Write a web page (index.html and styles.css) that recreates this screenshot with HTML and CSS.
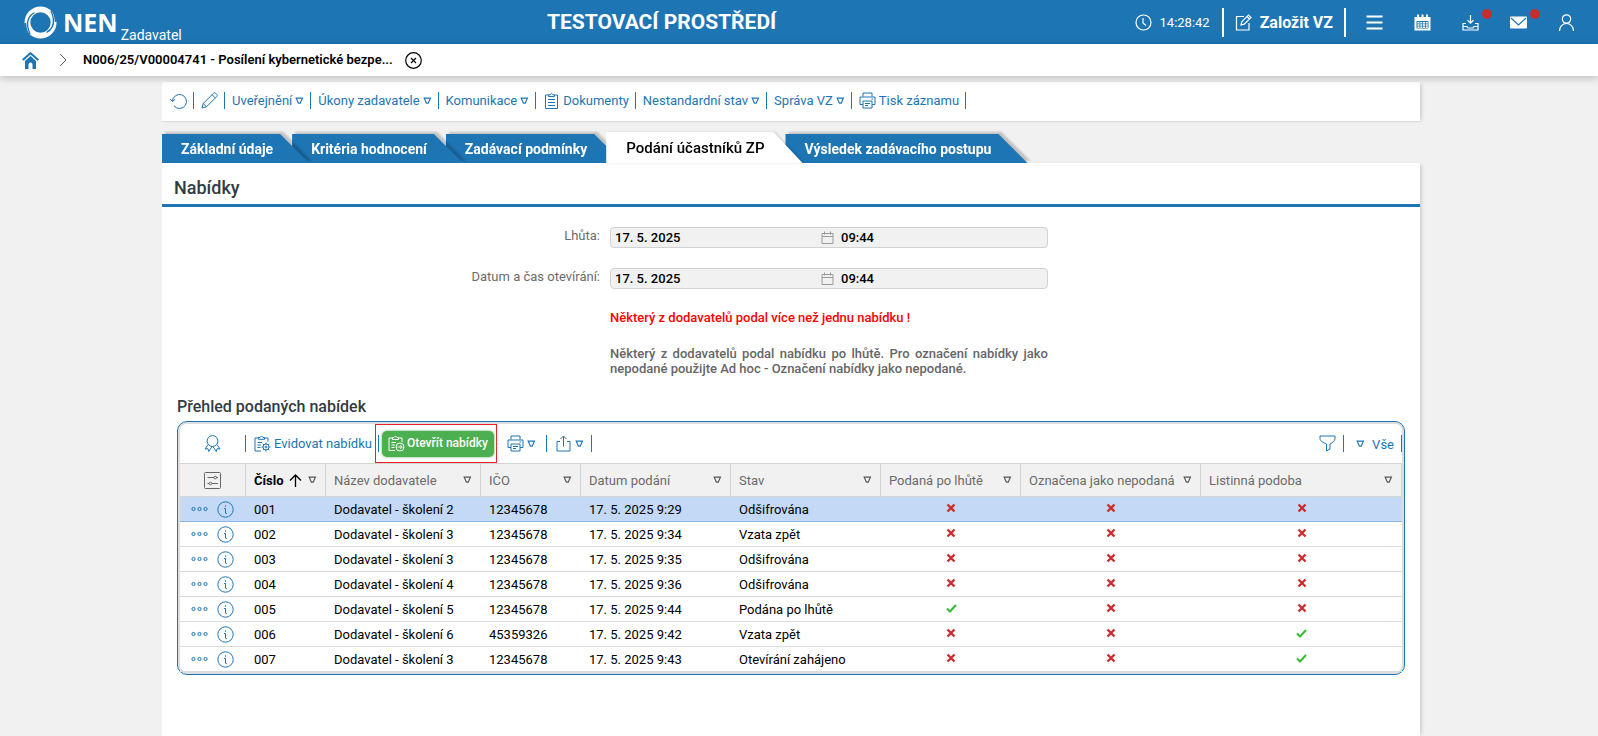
FILE: index.html
```html
<!DOCTYPE html>
<html lang="cs">
<head>
<meta charset="utf-8">
<meta name="viewport" content="width=device-width, initial-scale=1">
<title>NEN – Nabídky</title>
<link rel="stylesheet" href="styles.css">
</head>
<body>
<svg class="sprite" aria-hidden="true">
  <symbol id="tri" viewBox="0 0 9 8"><path d="M1.2 1.2h6.2L5.2 6.2H3.4z"/></symbol>
  <symbol id="print" viewBox="0 0 17 17"><path d="M4 4.5V1h9v3.5M4 12.5H1V5h15v7.5h-3M4 9h9v7H4zM6 11.5h5M6 13.5h3M12.5 7h1.5"/></symbol>
  <symbol id="info" viewBox="0 0 17 17"><circle cx="8.500" cy="8.500" r="7.700"/><path d="M8.500 4.300v1.500M7 7.500h1.500v4.500c0 .6.500.7 1.300.5"/></symbol>
  <symbol id="dots" viewBox="0 0 17 6"><circle cx="2.500" cy="3" r="1.600"/><circle cx="8.500" cy="3" r="1.600"/><circle cx="14.500" cy="3" r="1.600"/></symbol>
  <symbol id="cal" viewBox="0 0 13 13"><path d="M1 2.500h11v10H1zM1 5.500h11M3.500.500v3M9.500.500v3"/></symbol>
  <symbol id="no" viewBox="0 0 10 10"><path d="M1.500 1.500l7 7M8.500 1.500l-7 7"/></symbol>
  <symbol id="yes" viewBox="0 0 11 9"><path d="M1 4.500l3 3L10 1"/></symbol>
</svg>

<header class="topbar">
  <a class="brand" href="#">
    <svg class="brand-mark" viewBox="0 0 33 33" aria-hidden="true">
      <path fill="#fff" fill-rule="evenodd" d="M16.500.5a16 16 0 1 1 0 32a16 16 0 1 1 0-32zM16.500 6.300a10.200 10.200 0 1 0 0 20.400a10.200 10.200 0 1 0 0-20.400z"/>
      <path fill="none" stroke="#1e75b4" stroke-width="1.400" d="M10.500 6.500C5 9.500 3 14 3.600 20C4 23 4.500 25 6 28M22.500 26.500c5.500-3 7.500-7.500 6.900-13.500C29 10 28.500 8 27 5"/>
      <path fill="#1e75b4" d="M.3 17C-.2 22 2 26.500 6 29.500C3.500 26 2.300 22 2.200 17zM32.700 16C33.200 11 31 6.500 27 3.500C29.500 7 30.700 11 30.800 16z"/>
    </svg>
    <span class="brand-name">NEN</span>
    <span class="brand-role">Zadavatel</span>
  </a>
  <strong class="environment">TESTOVACÍ PROSTŘEDÍ</strong>
  <div class="top-actions">
    <span class="clock">
      <svg class="ico" viewBox="0 0 17 17"><circle cx="8.500" cy="8.500" r="7.500"/><path d="M8 4v5l3 2.500"/></svg>
      <time>14:28:42</time>
    </span>
    <button class="create">
      <svg class="ico" viewBox="0 0 17 17"><path d="M9 2.500H1.500V16H14V9M6 11l.8-3.300L13.500 1l2.500 2.500-6.700 6.700zM12 2.500l2.500 2.500"/></svg>
      Založit VZ
    </button>
    <nav class="top-icons" aria-label="Uživatelské nástroje">
      <button aria-label="Menu"><svg class="ico thick" viewBox="0 0 17 17"><path d="M.5 2.500h16M.5 8.500h16M.5 14.500h16"/></svg></button>
      <button aria-label="Kalendář"><svg class="ico solid" viewBox="0 0 17 17"><path fill-rule="evenodd" d="M.5 3H3V.5h2V3h2.500V.5h2V3H12V.5h2V3h2.500v13.500H.5zM2.500 7v7.500h12V7z"/><path d="M3.500 8h2v1.500h-2zM6.300 8h2v1.500h-2zM9 8h2v1.500H9zM11.800 8h2v1.500h-2zM3.500 10.300h2v1.500h-2zM6.300 10.300h2v1.500h-2zM9 10.300h2v1.500H9zM11.800 10.300h2v1.500h-2zM3.500 12.500h2V14h-2zM6.300 12.500h2V14h-2zM9 12.500h2V14H9zM11.800 12.500h2V14h-2z"/></svg></button>
      <button aria-label="Stažené soubory"><svg class="ico" viewBox="0 0 17 17"><path d="M8.500 1v8M5.500 6.200l3 3 3-3M4 9.500H1V16h15V9.500h-3M1 12.500h4l1 1.500h5l1-1.500h4"/></svg><i class="badge"></i></button>
      <button aria-label="Zprávy"><svg class="ico solid" viewBox="0 0 17 17"><rect y="2.500" width="17" height="12" rx="1"/><path fill="none" stroke="#1e75b4" d="M1 4l7.500 7L16 4"/></svg><i class="badge"></i></button>
      <button aria-label="Profil"><svg class="ico" viewBox="0 0 17 17"><circle cx="8.500" cy="5" r="4.200"/><path d="M1.500 17c0-4.500 3-7.500 7-7.500s7 3 7 7.500"/></svg></button>
    </nav>
  </div>
</header>

<nav class="crumbs" aria-label="Navigace">
  <a href="#" aria-label="Domů"><svg class="home" viewBox="0 0 17 17"><path d="M3 9l5.500-5L14 9v8h-3.500v-4.500a2 2 0 0 0-4 0V17H3z"/><path class="roof" d="M.7 8L8.500 1.200 16.300 8"/></svg></a>
  <svg class="chevron" viewBox="0 0 8 14"><path d="M1 1l6 6-6 6"/></svg>
  <a class="crumb" href="#">N006/25/V00004741 - Posílení kybernetické bezpe...</a>
  <button class="close" aria-label="Zavřít"><svg viewBox="0 0 17 17"><circle cx="8.500" cy="8.500" r="7.800"/><path d="M6 6l5 5M11 6l-5 5"/></svg></button>
</nav>

<main class="page">
  <div class="toolbar record-tools">
    <button aria-label="Obnovit"><svg class="ico" viewBox="0 0 17 17"><path d="M2.500 9.500A7 7 0 1 1 4 13.800M.3 7l2.200 2.500L5 7.300"/></svg></button>
    <button aria-label="Upravit"><svg class="ico" viewBox="0 0 17 17"><path d="M1 16l1.200-4.500L12.500 1.200q1-.8 2 0l1.300 1.300q.8 1 0 2L5.500 14.800zM11 2.700l3.300 3.300M2.200 11.500l3.300 3.300"/></svg></button>
    <button>Uveřejnění <svg class="tri"><use href="#tri"/></svg></button>
    <button>Úkony zadavatele <svg class="tri"><use href="#tri"/></svg></button>
    <button>Komunikace <svg class="tri"><use href="#tri"/></svg></button>
    <button><svg class="ico" viewBox="0 0 17 17"><path d="M5.500 3H2.500v13.500h12V3h-3M5.500 4.500V2.800H7a1.600 1.600 0 0 1 3 0h1.500v1.700zM5 7.500h7M5 10.500h7M5 13.500h7"/></svg>Dokumenty</button>
    <button>Nestandardní stav <svg class="tri"><use href="#tri"/></svg></button>
    <button>Správa VZ <svg class="tri"><use href="#tri"/></svg></button>
    <button><svg class="ico"><use href="#print"/></svg>Tisk záznamu</button>
  </div>

  <div class="tabs" role="tablist">
    <div class="tab t1"><button role="tab">Základní údaje</button></div>
    <div class="tab t2"><button role="tab">Kritéria hodnocení</button></div>
    <div class="tab t3"><button role="tab">Zadávací podmínky</button></div>
    <div class="tab active"><button role="tab" aria-selected="true">Podání účastníků ZP</button></div>
    <div class="tab"><button role="tab">Výsledek zadávacího postupu</button></div>
  </div>

  <section class="panel">
    <h1>Nabídky</h1>
    <div class="form">
      <label for="deadline">Lhůta:</label>
      <div class="datetime">
        <input class="date" id="deadline" value="17. 5. 2025" readonly>
        <svg><use href="#cal"/></svg>
        <input class="time" aria-label="Lhůta – čas" value="09:44" readonly>
      </div>
      <label for="opening">Datum a čas otevírání:</label>
      <div class="datetime">
        <input class="date" id="opening" value="17. 5. 2025" readonly>
        <svg><use href="#cal"/></svg>
        <input class="time" aria-label="Otevírání – čas" value="09:44" readonly>
      </div>
      <p class="warning">Některý z dodavatelů podal více než jednu nabídku !</p>
      <p class="note">Některý z dodavatelů podal nabídku po lhůtě. Pro označení nabídky jako nepodané použijte Ad hoc - Označení nabídky jako nepodané.</p>
    </div>

    <h2>Přehled podaných nabídek</h2>
    <div class="grid">
      <div class="toolbar grid-tools">
        <button class="first" aria-label="Certifikát"><svg class="ico" viewBox="0 0 17 17"><circle cx="8.500" cy="6" r="5.400"/><path d="M4 9.500L1 14l3-.3.700 2.800L8 11.600M13 9.500l3 4.500-3-.3-.7 2.800L9 11.600"/></svg></button>
        <button class="register"><svg class="ico" viewBox="0 0 17 17"><path d="M4.500 3H1v13h6M10.500 3H14v3.500M4.500 4.300V2.500H6a1.600 1.600 0 0 1 3 0h1.500v1.800zM3.500 7.500H8M3.500 10H7M3.500 12.500h3"/><circle cx="12" cy="12" r="3"/><circle cx="12" cy="12" r="1"/><path d="M12 7.500V9M12 15v1.500M7.500 12H9M15 12h1.500M8.800 8.800l1.100 1.100M14.100 14.100l1.100 1.100M15.200 8.800l-1.100 1.100M9.900 14.100l-1.100 1.100"/></svg>Evidovat nabídku</button>
        <span class="highlight">
          <button class="open"><svg class="ico" viewBox="0 0 17 17"><path d="M4.500 3H1v12.500h6M10.500 3H14v4M4.500 4.500V2.500H6a1.600 1.600 0 0 1 3 0h1.500v2zM3.500 7.500H8M3.500 10H7M3.500 12.500h3"/><circle cx="12" cy="12" r="4"/><path d="M9.500 12h4.500M12.300 10l2 2-2 2"/></svg>Otevřít nabídky</button>
        </span>
        <button class="print" aria-label="Tisk"><svg class="ico"><use href="#print"/></svg><svg class="tri"><use href="#tri"/></svg></button>
        <button aria-label="Export"><svg class="ico" viewBox="0 0 17 17"><path d="M5 6.500H2V16h13V6.500h-3M8.500 11.500V1.500M5.500 4l3-3 3 3"/></svg><svg class="tri"><use href="#tri"/></svg></button>
        <span class="spacer"></span>
        <button class="filter" aria-label="Filtr"><svg class="ico" viewBox="0 0 17 17"><path d="M1 1h15v2.500c0 2.500-2.500 4-5 5.500v5L7.500 16V9C4 7.500 1 6 1 3.500z"/></svg></button>
        <button class="all"><svg class="tri"><use href="#tri"/></svg>Vše</button>
      </div>
      <table>
        <colgroup><col class="c-act"><col class="c-num"><col class="c-name"><col class="c-id"><col class="c-date"><col class="c-state"><col class="c-late"><col class="c-mark"><col></colgroup>
        <thead>
          <tr>
            <th aria-label="Nastavení"><svg class="settings" viewBox="0 0 17 17"><rect x=".5" y=".5" width="16" height="16" rx="1"/><path d="M3.500 5.500H10M12.500 5.500h1.500M3.500 11.500H5M8 11.500h6"/><circle cx="11.300" cy="5.500" r="1.300"/><circle cx="6.500" cy="11.500" r="1.300"/></svg></th>
            <th class="sorted"><div>Číslo <svg class="arrow" viewBox="0 0 13 13"><path d="M6.500 13V1M1 6.500L6.500 1 12 6.500"/></svg><svg class="tri"><use href="#tri"/></svg></div></th>
            <th><div>Název dodavatele<svg class="tri"><use href="#tri"/></svg></div></th>
            <th><div>IČO<svg class="tri"><use href="#tri"/></svg></div></th>
            <th><div>Datum podání<svg class="tri"><use href="#tri"/></svg></div></th>
            <th><div>Stav<svg class="tri"><use href="#tri"/></svg></div></th>
            <th><div>Podaná po lhůtě<svg class="tri"><use href="#tri"/></svg></div></th>
            <th><div>Označena jako nepodaná<svg class="tri"><use href="#tri"/></svg></div></th>
            <th><div>Listinná podoba<svg class="tri"><use href="#tri"/></svg></div></th>
          </tr>
        </thead>
        <tbody>
          <tr class="selected"><td class="acts"><svg class="dots"><use href="#dots"/></svg><svg class="info"><use href="#info"/></svg></td><td>001</td><td>Dodavatel - školení 2</td><td>12345678</td><td>17. 5. 2025 9:29</td><td>Odšifrována</td><td class="flag"><svg class="no"><use href="#no"/></svg></td><td class="flag"><svg class="no"><use href="#no"/></svg></td><td class="flag"><svg class="no"><use href="#no"/></svg></td></tr>
          <tr><td class="acts"><svg class="dots"><use href="#dots"/></svg><svg class="info"><use href="#info"/></svg></td><td>002</td><td>Dodavatel - školení 3</td><td>12345678</td><td>17. 5. 2025 9:34</td><td>Vzata zpět</td><td class="flag"><svg class="no"><use href="#no"/></svg></td><td class="flag"><svg class="no"><use href="#no"/></svg></td><td class="flag"><svg class="no"><use href="#no"/></svg></td></tr>
          <tr><td class="acts"><svg class="dots"><use href="#dots"/></svg><svg class="info"><use href="#info"/></svg></td><td>003</td><td>Dodavatel - školení 3</td><td>12345678</td><td>17. 5. 2025 9:35</td><td>Odšifrována</td><td class="flag"><svg class="no"><use href="#no"/></svg></td><td class="flag"><svg class="no"><use href="#no"/></svg></td><td class="flag"><svg class="no"><use href="#no"/></svg></td></tr>
          <tr><td class="acts"><svg class="dots"><use href="#dots"/></svg><svg class="info"><use href="#info"/></svg></td><td>004</td><td>Dodavatel - školení 4</td><td>12345678</td><td>17. 5. 2025 9:36</td><td>Odšifrována</td><td class="flag"><svg class="no"><use href="#no"/></svg></td><td class="flag"><svg class="no"><use href="#no"/></svg></td><td class="flag"><svg class="no"><use href="#no"/></svg></td></tr>
          <tr><td class="acts"><svg class="dots"><use href="#dots"/></svg><svg class="info"><use href="#info"/></svg></td><td>005</td><td>Dodavatel - školení 5</td><td>12345678</td><td>17. 5. 2025 9:44</td><td>Podána po lhůtě</td><td class="flag"><svg class="yes"><use href="#yes"/></svg></td><td class="flag"><svg class="no"><use href="#no"/></svg></td><td class="flag"><svg class="no"><use href="#no"/></svg></td></tr>
          <tr><td class="acts"><svg class="dots"><use href="#dots"/></svg><svg class="info"><use href="#info"/></svg></td><td>006</td><td>Dodavatel - školení 6</td><td>45359326</td><td>17. 5. 2025 9:42</td><td>Vzata zpět</td><td class="flag"><svg class="no"><use href="#no"/></svg></td><td class="flag"><svg class="no"><use href="#no"/></svg></td><td class="flag"><svg class="yes"><use href="#yes"/></svg></td></tr>
          <tr><td class="acts"><svg class="dots"><use href="#dots"/></svg><svg class="info"><use href="#info"/></svg></td><td>007</td><td>Dodavatel - školení 3</td><td>12345678</td><td>17. 5. 2025 9:43</td><td>Otevírání zahájeno</td><td class="flag"><svg class="no"><use href="#no"/></svg></td><td class="flag"><svg class="no"><use href="#no"/></svg></td><td class="flag"><svg class="yes"><use href="#yes"/></svg></td></tr>
        </tbody>
      </table>
    </div>
  </section>
</main>
</body>
</html>
```
FILE: styles.css
```css
:root {
  --blue: #1e75b4;
  --line: #dcdcdc;
}

* { box-sizing: border-box; }

body {
  margin: 0;
  min-height: 100vh;
  display: flex;
  flex-direction: column;
  background: #f1f1f1;
  color: #000;
  font: 13px/15px Roboto, "Liberation Sans", sans-serif;
}

button {
  margin: 0;
  padding: 0;
  border: 0;
  background: none;
  color: inherit;
  font: inherit;
  cursor: pointer;
}

a { color: inherit; text-decoration: none; }
svg { display: block; flex: none; fill: none; stroke: currentColor; }
.sprite { position: absolute; width: 0; height: 0; }
.ico { width: 17px; height: 17px; stroke-width: 1; }
.ico.thick { stroke-width: 2; }
.ico.solid { fill: currentColor; stroke: none; }
.tri { width: 9px; height: 8px; stroke-width: 1.2; }

/* Top bar */
.topbar {
  height: 44px;
  padding: 0 23px 0 24px;
  display: grid;
  grid-template-columns: auto 1fr auto;
  align-items: center;
  background: var(--blue);
  color: #fff;
}
.brand { display: flex; align-items: center; width: 226px; height: 44px; }
.brand-mark { width: 33px; height: 33px; stroke: none; }
.brand-name { margin-left: 6px; font: 700 25px/28px "Open Sans", sans-serif; }
.brand-role { align-self: flex-end; margin-left: 3px; font-size: 14px; line-height: 18px; }
.environment { padding-left: 297px; font-size: 21px; line-height: 24px; font-weight: 700; }
.top-actions { display: flex; align-items: center; }
.top-actions .ico { stroke-width: 1.2; }
.top-actions .ico.thick { stroke-width: 2; }
.clock { display: flex; align-items: center; gap: 8px; padding-right: 12px; }
.create {
  display: flex;
  align-items: center;
  gap: 8px;
  height: 29px;
  padding: 0 11px;
  border: solid #fff;
  border-width: 0 2px;
  font-size: 16px;
  font-weight: 700;
}
.top-icons { display: flex; gap: 31px; padding-left: 20px; }
.top-icons button { position: relative; }
.badge {
  position: absolute;
  top: -5px;
  right: -13px;
  width: 10px;
  height: 10px;
  border-radius: 50%;
  background: #cc2b2b;
}

/* Breadcrumb */
.crumbs {
  position: relative;
  z-index: 9;
  height: 32px;
  padding: 0 22px;
  display: flex;
  align-items: center;
  background: #fff;
  box-shadow: 0 2px 8px rgba(0, 0, 0, .22);
}
.home { width: 17px; height: 17px; fill: var(--blue); stroke: none; }
.home .roof { fill: none; stroke: var(--blue); stroke-width: 2; }
.chevron { width: 8px; height: 14px; margin: 0 16px 0 20px; stroke: #666; }
.crumb { padding-bottom: 1px; font-weight: 600; }
.close { margin-left: 12px; }
.close svg { width: 17px; height: 17px; stroke-width: 1.2; }

/* Record */
.page {
  flex: 1;
  display: flex;
  flex-direction: column;
  margin: 6px 178px 0 162px;
}
.toolbar { display: flex; align-items: center; color: var(--blue); }
.toolbar button {
  display: flex;
  align-items: center;
  gap: 3px;
  height: 17px;
  padding: 0 7px 0 8px;
  border-right: 1px solid var(--blue);
  white-space: nowrap;
}
.record-tools {
  height: 40px;
  padding: 0 1px 2px;
  border-bottom: 1px solid var(--line);
  background: #fff;
  box-shadow: 3px 0 4px -2px rgba(0, 0, 0, .2);
}
.record-tools button { padding: 0 6px 0 7px; }
.tabs { display: flex; align-items: flex-end; margin-top: 10px; }
.tab { position: relative; filter: drop-shadow(3px -2px 1px rgba(0, 0, 0, .2)); }
.tab + .tab { margin-left: -17px; }
.t1 { z-index: 3; }
.t2 { z-index: 2; }
.t3 { z-index: 1; }
.tab button {
  display: block;
  height: 29px;
  padding: 2px 36px 0 19px;
  background: var(--blue);
  color: #fff;
  font-size: 14px;
  font-weight: 700;
  white-space: nowrap;
  clip-path: polygon(0 0, calc(100% - 29px) 0, 100% 100%, 0 100%);
}
.tab.active { z-index: 4; filter: drop-shadow(2px 0 1px rgba(0, 0, 0, .12)); }
.tab.active button {
  height: 31px;
  background: #fff;
  color: #000;
  padding: 2px 38px 0 20px;
  font-size: 15px;
  font-weight: 500;
}
.panel {
  flex: 1;
  padding-bottom: 24px;
  background: #fff;
  box-shadow: 3px 0 4px -2px rgba(0, 0, 0, .2);
}
h1 {
  margin: 0 0 20px;
  padding: 15px 12px 6px;
  border-bottom: 3px solid var(--blue);
  color: #333b42;
  font-size: 18px;
  line-height: 20px;
  font-weight: 500;
}
.form {
  display: grid;
  grid-template-columns: 438fr 438fr 362fr;
  column-gap: 10px;
}
.form label { grid-column: 1; padding-top: 1px; text-align: right; color: #6b6b6b; }
.datetime {
  grid-column: 2;
  display: flex;
  align-items: center;
  height: 21px;
  margin-bottom: 20px;
  border: 1px solid #d2d2d2;
  border-radius: 4px;
  background: #f1f1f1;
}
.datetime input {
  min-width: 0;
  border: 0;
  padding: 0;
  background: none;
  color: #000;
  font: 500 13px/15px Roboto, sans-serif;
}
.datetime .date { flex: 208; padding-left: 4px; }
.datetime .time { flex: 208; padding-left: 7px; }
.datetime svg { width: 13px; height: 13px; stroke: #999; }
.form p { grid-column: 2; margin: 0; font-weight: 500; }
.form .warning { color: #f00; padding: 1px 0 21px; }
.form .note { color: #666; text-align: justify; }
h2 {
  margin: 22px 15px 5px;
  color: #333b42;
  font-size: 16px;
  line-height: 18px;
  font-weight: 500;
}

/* Grid of offers */
.grid {
  margin: 0 15px;
  padding: 2px;
  border: 1px solid var(--blue);
  border-radius: 10px;
  background: #fff;
  box-shadow: inset 0 0 0 2px #dedede;
}
.grid-tools { height: 39px; background: #fff; border-radius: 8px 8px 0 0; }
.grid-tools .first { width: 66px; padding: 0 0 0 24px; }
.grid-tools .register { padding-right: 6px; }
.highlight {
  position: relative;
  display: flex;
  align-items: center;
  height: 39px;
  margin-left: -4px;
  padding: 0 2px 0 6px;
  border: 1px solid #e8202a;
}
.toolbar .open {
  height: 26px;
  padding: 0 6px;
  border: 0;
  border-radius: 5px;
  background: #4caf50;
  box-shadow: 0 0 2px 1px #b5dfb7;
  color: #fff;
  font-size: 12px;
  font-weight: 500;
  gap: 2px;
}
.grid-tools .print { padding: 0 10px; }
.spacer { flex: 1; }
.grid-tools .all { padding: 2px 7px 0 12px; gap: 7px; }
.all .tri { margin-bottom: 2px; }
table { width: 100%; table-layout: fixed; border-collapse: separate; border-spacing: 0; }
.c-act { width: 66px; }
.c-num { width: 80px; }
.c-name { width: 155px; }
.c-id { width: 100px; }
.c-date, .c-state { width: 150px; }
.c-late { width: 140px; }
.c-mark { width: 180px; }
th {
  height: 34px;
  padding: 0 8px;
  border: solid #d4d4d4;
  border-width: 1px 1px 1px 0;
  background: #f1f1f1;
  color: #6b6b6b;
  font-weight: 400;
  text-align: left;
  white-space: nowrap;
}
th div { display: flex; align-items: center; justify-content: space-between; }
.sorted { color: #000; font-weight: 700; }
.arrow { width: 13px; height: 13px; stroke-width: 1.3; }
th .tri { stroke: #555; }
.settings { width: 17px; height: 17px; margin-left: 16px; stroke: #666; }
td { height: 25px; padding: 0 8px; border-bottom: 1px solid var(--line); white-space: nowrap; }
.selected td { background: #c3d9f5; border-bottom-color: #8db6e4; }
td.acts { padding: 0 0 0 11px; color: var(--blue); }
.acts svg { display: inline-block; vertical-align: middle; }
.dots { width: 17px; height: 6px; }
.info { width: 17px; height: 17px; margin-left: 9px; }
.flag svg { margin: 0 auto 2px; }
.no { width: 10px; height: 10px; stroke: #cc2b2b; stroke-width: 2.3; }
.yes { width: 11px; height: 9px; stroke: #35bb35; stroke-width: 2; }
```
